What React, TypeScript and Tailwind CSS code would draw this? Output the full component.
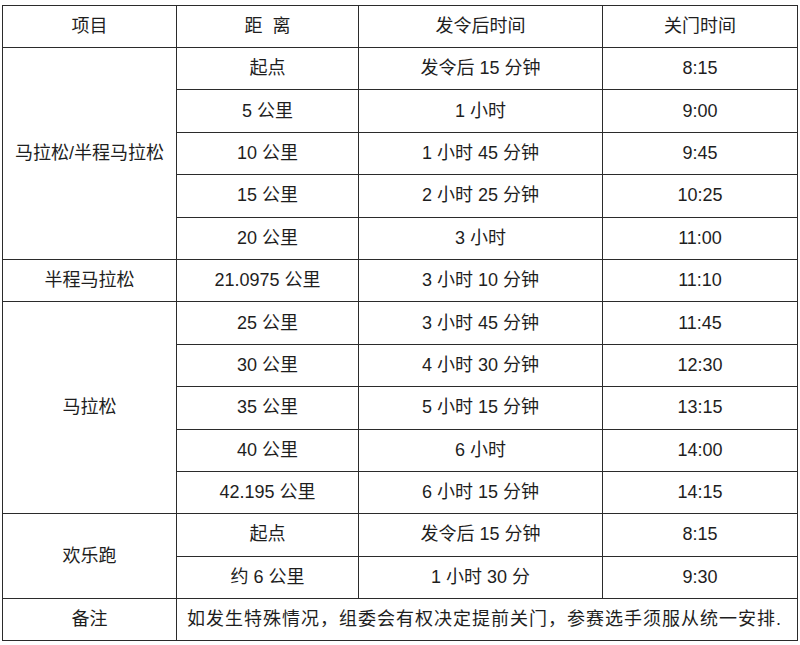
import React from "react";

const td = "border-[1.5px] border-[#2b2b2b] text-center align-middle p-0";

type Row = { group?: { name: string; span: number }; dist: string; after: string; close: string };

const rows: Row[] = [
  { group: { name: "马拉松/半程马拉松", span: 5 }, dist: "起点", after: "发令后 15 分钟", close: "8:15" },
  { dist: "5 公里", after: "1 小时", close: "9:00" },
  { dist: "10 公里", after: "1 小时 45 分钟", close: "9:45" },
  { dist: "15 公里", after: "2 小时 25 分钟", close: "10:25" },
  { dist: "20 公里", after: "3 小时", close: "11:00" },
  { group: { name: "半程马拉松", span: 1 }, dist: "21.0975 公里", after: "3 小时 10 分钟", close: "11:10" },
  { group: { name: "马拉松", span: 5 }, dist: "25 公里", after: "3 小时 45 分钟", close: "11:45" },
  { dist: "30 公里", after: "4 小时 30 分钟", close: "12:30" },
  { dist: "35 公里", after: "5 小时 15 分钟", close: "13:15" },
  { dist: "40 公里", after: "6 小时", close: "14:00" },
  { dist: "42.195 公里", after: "6 小时 15 分钟", close: "14:15" },
  { group: { name: "欢乐跑", span: 2 }, dist: "起点", after: "发令后 15 分钟", close: "8:15" },
  { dist: "约 6 公里", after: "1 小时 30 分", close: "9:30" },
];

export default function App() {
  return (
    <div
      className="w-[800px] h-[645px] bg-white pt-[5px] pl-[2px] text-[18px] text-[#1e1e1e]"
      style={{ fontFamily: '"Liberation Sans", "Noto Sans CJK SC", sans-serif' }}
    >
      <table className="border-collapse table-fixed w-[795px]">
        <colgroup>
          <col className="w-[174px]" />
          <col className="w-[182px]" />
          <col className="w-[244px]" />
          <col className="w-[195px]" />
        </colgroup>
        <tbody>
          <tr className="h-[42px]">
            <td className={td}>项目</td>
            <td className={td}>距&nbsp;&nbsp;离</td>
            <td className={td}>发令后时间</td>
            <td className={td}>关门时间</td>
          </tr>
          {rows.map((r, i) => (
            <tr key={i} className="h-[42.4px]">
              {r.group && (
                <td className={td} rowSpan={r.group.span}>
                  {r.group.name}
                </td>
              )}
              <td className={td}>{r.dist}</td>
              <td className={td}>{r.after}</td>
              <td className={td}>{r.close}</td>
            </tr>
          ))}
          <tr className="h-[42.4px]">
            <td className={td}>备注</td>
            <td
              className="border-[1.5px] border-[#2b2b2b] text-left align-middle pl-[10px] tracking-[1px]"
              colSpan={3}
            >
              如发生特殊情况，组委会有权决定提前关门，参赛选手须服从统一安排.
            </td>
          </tr>
        </tbody>
      </table>
    </div>
  );
}
